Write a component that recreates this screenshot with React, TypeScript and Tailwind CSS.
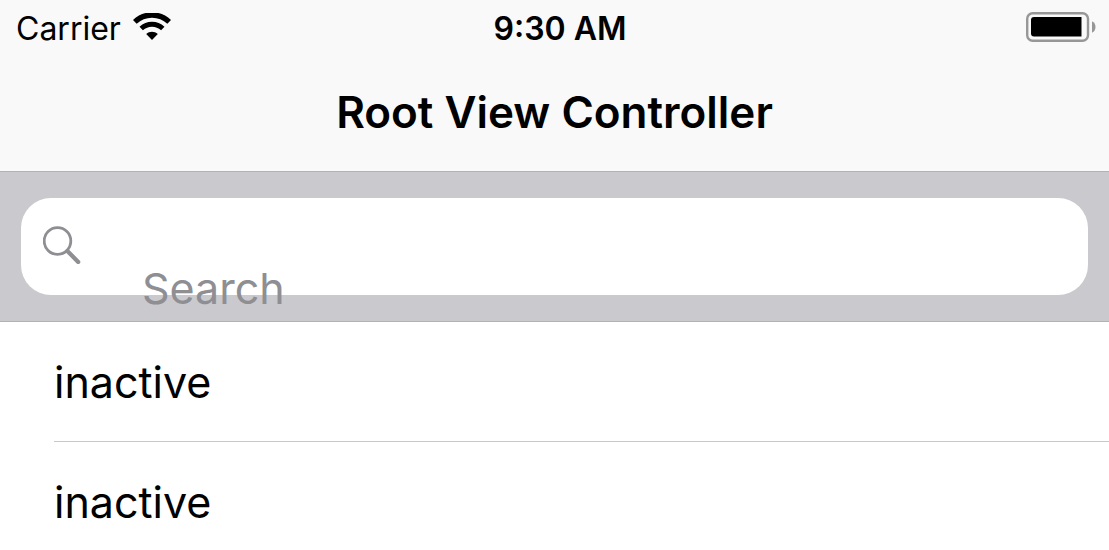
const rows = [
  { id: 1, label: 'inactive' },
  { id: 2, label: 'inactive' },
];

function WifiIcon() {
  return (
    <svg className="h-7 w-[38px]" viewBox="0 0 38 28" fill="none" aria-hidden="true">
      <path d="M1.8 8.9C11.4 -0.3 26.6 -0.3 36.2 8.9" stroke="black" strokeWidth="5.4" />
      <path d="M8.2 15.5C14.4 9.8 23.6 9.8 29.8 15.5" stroke="black" strokeWidth="5" />
      <path d="M13.2 21.1C16.6 18 21.4 18 24.8 21.1L19 26.9Z" fill="black" />
    </svg>
  );
}

function BatteryIcon() {
  return (
    <svg className="h-[30px] w-[70px]" viewBox="0 0 70 30" fill="none" aria-hidden="true">
      <rect x="1.2" y="1.2" width="60.8" height="27.6" rx="5.5" stroke="#979797" strokeWidth="2.4" />
      <path d="M8 5H55.5V24.5H8Q5 24.5 5 21.5V8Q5 5 8 5Z" fill="black" />
      <path d="M66 9.3C70.7 11 70.7 19 66 20.7Z" fill="#979797" />
    </svg>
  );
}

function SearchIcon() {
  return (
    <svg className="h-[38px] w-[38px] shrink-0" viewBox="0 0 38 38" fill="none" stroke="#8e8e93" aria-hidden="true">
      <circle cx="14.5" cy="15" r="13.3" strokeWidth="2.8" />
      <path d="M24.4 25L35.2 36" strokeWidth="4.2" strokeLinecap="round" />
    </svg>
  );
}

export default function App() {
  return (
    <div className="flex h-screen flex-col overflow-hidden bg-white font-['Inter',sans-serif] text-black">
      <header className="border-b border-[#b2b2b4] bg-[#f9f9f9]">
        <div className="grid h-14 grid-cols-3 items-center pr-[13px] pb-0.5 pl-4 text-[32px] leading-10">
          <div className="flex items-center gap-3">
            <span className="pt-1">Carrier</span>
            <WifiIcon />
          </div>
          <time className="pt-1 pl-2 text-center font-semibold">9:30 AM</time>
          <div className="flex justify-end">
            <BatteryIcon />
          </div>
        </div>
        <h1 className="flex h-[115px] items-center justify-center pb-1 text-[44px] leading-none font-semibold">
          Root View Controller
        </h1>
      </header>

      <form role="search" className="border-b border-[#b2b2b4] bg-[#c9c9ce] px-[21px] py-[26px]">
        <div className="flex h-[97px] items-start rounded-[30px] bg-white pl-[22px]">
          <label htmlFor="search" className="pt-7">
            <SearchIcon />
          </label>
          <input
            id="search"
            type="search"
            aria-label="Search"
            placeholder="Search"
            className="mt-[54px] ml-[61px] h-[72px] min-w-0 flex-1 bg-transparent text-[43px] outline-none placeholder:text-[#8e8e93]"
          />
        </div>
      </form>

      <ul className="flex-1 pl-[54px]">
        {rows.map((row) => (
          <li key={row.id} className="flex h-[120px] items-center border-b border-[#c8c7cc] pt-0.5 text-[43px] leading-none">
            {row.label}
          </li>
        ))}
      </ul>
    </div>
  );
}
